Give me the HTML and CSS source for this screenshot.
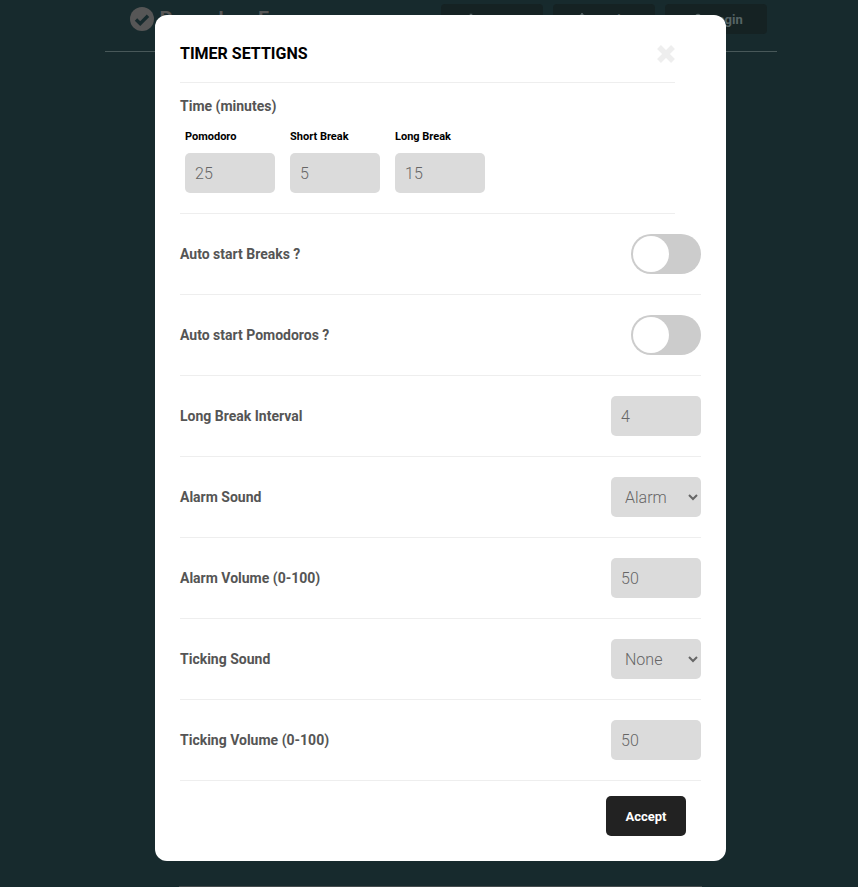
FILE: index.html
```html
<!DOCTYPE html>
<html lang="en">
<head>
  <meta charset="UTF-8" />
  <title>Pomodoro Focus</title>
  <link rel="stylesheet" href="styles.css">
</head>

<body>
  <!-- PAGE BEHIND THE MODAL -->
  <header class="topbar">
    <a class="logo" href="#">
      <svg class="logo-icon" viewBox="0 0 24 24" width="24" height="24">
        <circle cx="12" cy="12" r="12" fill="#565656"/>
        <path d="M6 12.5l4.2 4.2L18 8.8" fill="none" stroke="#172a2d" stroke-width="3.4"/>
      </svg>
      Pomodoro Focus
    </a>
    <nav class="topnav">
      <a class="nav-btn" href="#">
        <svg viewBox="0 0 14 14" width="12" height="12"><path d="M1 13V8h3v5zM5.500 13V1h3v12zM10 13V5h3v8z" fill="currentColor"/></svg>
        Report
      </a>
      <a class="nav-btn" href="#">
        <svg viewBox="0 0 14 14" width="12" height="12"><circle cx="7" cy="7" r="4" fill="none" stroke="currentColor" stroke-width="3"/><path d="M6 0h2v3H6zM0 6h3v2H0zM11 6h3v2h-3zM6 11h2v3H6z" fill="currentColor"/></svg>
        Setting
      </a>
      <a class="nav-btn" href="#">
        <svg viewBox="0 0 14 14" width="12" height="12"><circle cx="7" cy="4" r="3.200" fill="currentColor"/><path d="M1 14c0-4 2.500-6 6-6s6 2 6 6z" fill="currentColor"/></svg>
        Login
      </a>
    </nav>
  </header>
  <div class="timer-panel"></div>

  <!-- SETTINGS MODAL -->
  <div class="overlay">
    <div class="modal">
      <div class="modal-head">
        <h2>Timer Settigns</h2>
        <svg class="close" viewBox="0 0 20 20" width="20" height="20">
          <path d="M3 3l14 14M17 3L3 17" stroke="#eee" stroke-width="5.500"/>
        </svg>
      </div>

      <div class="time-section">
        <div class="row-label">Time (minutes)</div>
        <div class="time-fields">
          <label class="time-field">Pomodoro <input type="text" value="25" readonly></label>
          <label class="time-field">Short Break <input type="text" value="5" readonly></label>
          <label class="time-field">Long Break <input type="text" value="15" readonly></label>
        </div>
      </div>

      <div class="row">
        <span class="row-label">Auto start Breaks ?</span>
        <span class="toggle"><span class="knob"></span></span>
      </div>
      <div class="row">
        <span class="row-label">Auto start Pomodoros ?</span>
        <span class="toggle"><span class="knob"></span></span>
      </div>
      <div class="row">
        <span class="row-label">Long Break Interval</span>
        <input type="text" value="4" readonly>
      </div>
      <div class="row">
        <span class="row-label">Alarm Sound</span>
        <select><option>Alarm</option><option>Bell</option></select>
      </div>
      <div class="row">
        <span class="row-label">Alarm Volume (0-100)</span>
        <input type="text" value="50" readonly>
      </div>
      <div class="row">
        <span class="row-label">Ticking Sound</span>
        <select><option>None</option><option>Fast</option></select>
      </div>
      <div class="row">
        <span class="row-label">Ticking Volume (0-100)</span>
        <input type="text" value="50" readonly>
      </div>

      <div class="modal-foot">
        <button class="accept">Accept</button>
      </div>
    </div>
  </div>
</body>
</html>
```

FILE: styles.css
```css
/* BASE */
html { overflow: hidden; }
body {
  margin: 0;
  width: 881px;
  height: 887px;
  display: flex;
  flex-direction: column;
  align-items: center;
  font-family: 'Roboto', sans-serif;
  background: #172a2d;
}

/* PAGE BEHIND THE MODAL (dimmed) */
.topbar {
  width: 672px;
  height: 52px;
  box-sizing: border-box;
  padding: 4px 10px 0 25px;
  display: flex;
  justify-content: space-between;
  align-items: flex-start;
  border-bottom: 1px solid #485859;
}
.logo {
  display: flex;
  align-items: center;
  gap: 6px;
  height: 30px;
  color: #565656;
  font-size: 20px;
  font-weight: 700;
  text-decoration: none;
}
.topnav { display: flex; gap: 10px; }
.nav-btn {
  width: 102px;
  height: 30px;
  box-sizing: border-box;
  padding-left: 4px;
  display: flex;
  align-items: center;
  justify-content: center;
  gap: 6px;
  border-radius: 4px;
  background: #152223;
  color: #566465;
  font-size: 13px;
  font-weight: 700;
  text-decoration: none;
}
.timer-panel {
  width: 523px;
  height: 1px;
  margin-top: auto;
  background: #454c4d;
}

/* MODAL */
.overlay {
  position: absolute;
  top: 0; left: 0;
  width: 881px;
  display: flex;
  justify-content: center;
  padding-top: 15px;
}
.modal {
  width: 571px;
  height: 846px;
  box-sizing: border-box;
  padding: 0 25px;
  border-radius: 12px;
  background: #fff;
}
.modal-head {
  height: 68px;
  margin-right: 26px;
  box-sizing: border-box;
  padding: 31px 0 0;
  display: flex;
  justify-content: space-between;
  border-bottom: 1px solid #eee;
}
.modal-head h2 {
  margin: 0;
  font-size: 16px;
  line-height: 16px;
  font-weight: 700;
  text-transform: uppercase;
  color: #000;
}
.close { margin: -2px -1px 0 0; }

/* TIME INPUTS */
.time-section {
  height: 131px;
  margin-right: 26px;
  box-sizing: border-box;
  padding-top: 14px;
  border-bottom: 1px solid #eee;
}
.row-label {
  font-size: 14px;
  line-height: 18px;
  font-weight: 700;
  color: #555;
}
.time-fields {
  display: flex;
  gap: 15px;
  margin: 15px 0 0 5px;
}
.time-field {
  display: flex;
  flex-direction: column;
  gap: 10px;
  font-size: 11px;
  line-height: 13px;
  font-weight: 700;
  color: #000;
}

/* SETTING ROWS */
.row {
  height: 81px;
  box-sizing: border-box;
  display: flex;
  justify-content: space-between;
  align-items: center;
  border-bottom: 1px solid #eee;
}
input, select {
  width: 90px;
  height: 40px;
  box-sizing: border-box;
  padding: 10px;
  border: none;
  border-radius: 5px;
  background-color: #dbdbdb;
  font-family: 'Roboto', sans-serif;
  font-size: 16px;
  font-weight: 300;
  color: #666;
  outline: none;
}
.toggle {
  width: 70px;
  height: 40px;
  box-sizing: border-box;
  padding: 2px;
  border-radius: 40px;
  background: #ccc;
}
.knob {
  display: block;
  width: 36px;
  height: 36px;
  border-radius: 50%;
  background: #fff;
}

/* FOOTER */
.modal-foot {
  display: flex;
  justify-content: flex-end;
  padding: 15px 15px 0 0;
}
.accept {
  width: 80px;
  height: 40px;
  border: none;
  border-radius: 5px;
  background: #222;
  color: #fff;
  font-family: 'Roboto', sans-serif;
  font-size: 13px;
  font-weight: 700;
}
```
